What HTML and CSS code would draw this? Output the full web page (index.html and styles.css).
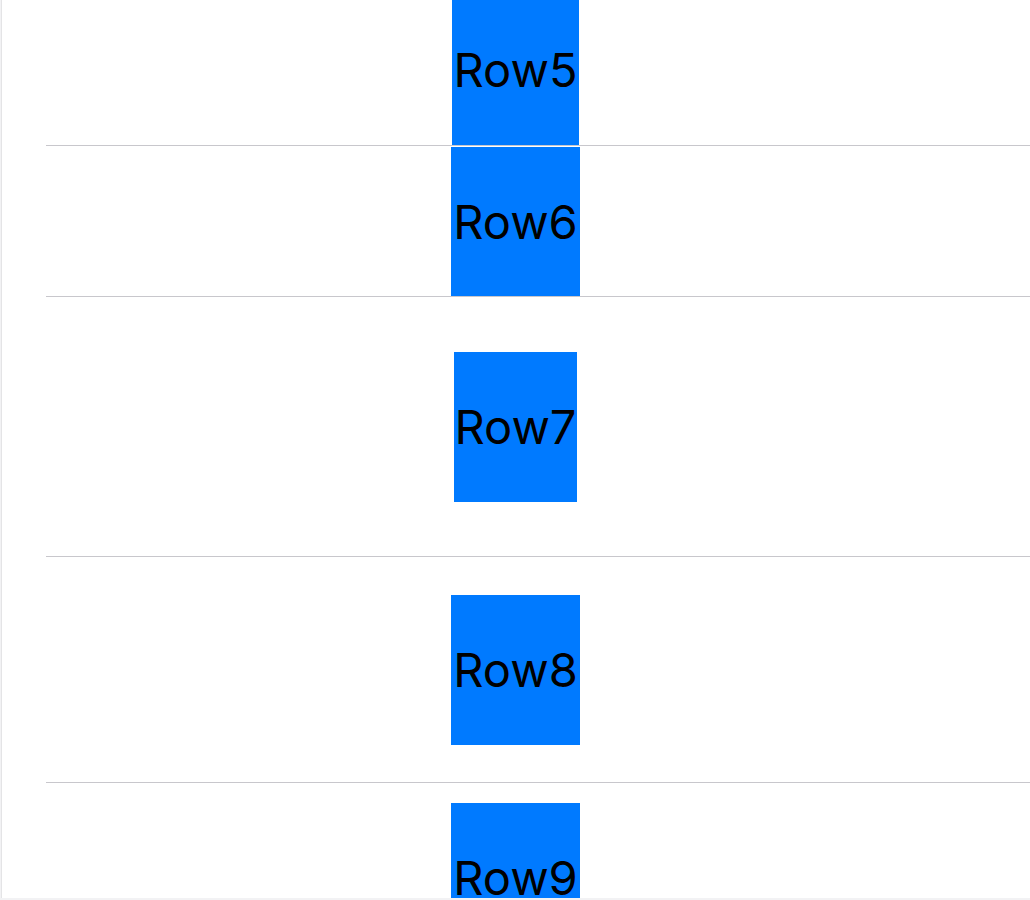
FILE: index.html
```html
<!DOCTYPE html>
<html lang="en">
<head>
<meta charset="utf-8">
<title>Rows</title>
<link rel="stylesheet" href="styles.css">
</head>
<body>
<div class="panel">
  <div class="list">
    <div class="row row-5"><div class="cell">Row5</div></div>
    <div class="sep"></div>
    <div class="row row-6"><div class="cell">Row6</div></div>
    <div class="sep"></div>
    <div class="row row-7"><div class="cell cell-narrow">Row7</div></div>
    <div class="sep"></div>
    <div class="row row-8"><div class="cell">Row8</div></div>
    <div class="sep"></div>
    <div class="row row-9"><div class="cell">Row9</div></div>
  </div>
</div>
</body>
</html>
```
FILE: styles.css
```css
html, body {
  margin: 0;
  padding: 0;
  width: 1030px;
  height: 900px;
  overflow: hidden;
  background: #f2f2f4;
}
body {
  font-family: Inter, "Noto Sans", "Liberation Sans", sans-serif;
}
.panel {
  margin-left: 1px;
  border-left: 1px solid #e4e4e6;
  height: 898px;
  background: #ffffff;
  overflow: hidden;
}
.list {
  margin-left: -1px;
  margin-top: -5px;
  display: flex;
  flex-direction: column;
}
.row {
  display: flex;
  justify-content: center;
  align-items: flex-start;
  box-sizing: border-box;
}
.cell {
  background: #007aff;
  color: #000;
  font-size: 47px;
  height: 150px;
  line-height: 150px;
  padding: 0 2px;
}
.cell-narrow {
  padding: 0 1px;
}
.row-5 { height: 150px; }
.row-6 { height: 150px; padding-top: 1px; }
.row-6 .cell { height: 149px; line-height: 149px; }
.row-7 { height: 259px; padding-top: 55px; }
.row-8 { height: 225px; padding-top: 38px; }
.row-9 { height: 200px; padding-top: 20px; }
.sep {
  height: 1px;
  margin-left: 45px;
  background: #c8c7cc;
}
```
